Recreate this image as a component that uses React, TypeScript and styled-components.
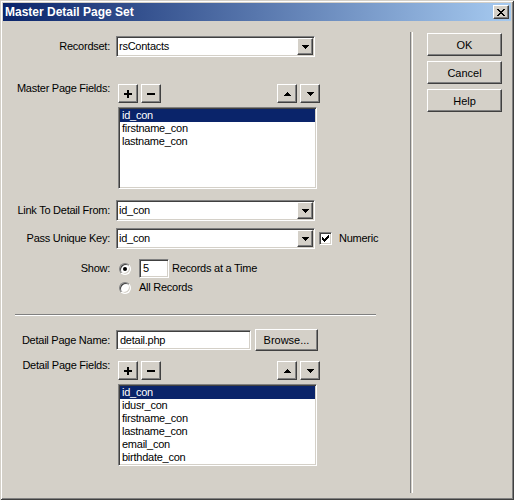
// libraries
import React from 'react';
import styled, { createGlobalStyle, css } from 'styled-components';

const GlobalStyle = createGlobalStyle`
  html, body {
    margin: 0;
    padding: 0;
    background: #d4d0c8;
  }
  body {
    font-family: "Liberation Sans", Arial, sans-serif;
    font-size: 11px;
    letter-spacing: -0.25px;
    color: #000000;
  }
`;

// classic 3D edges
const sunken = css`
  box-sizing: border-box;
  border: 1px solid;
  border-color: #808080 #ffffff #ffffff #808080;
  box-shadow: inset 1px 1px #404040, inset -1px -1px #d4d0c8;
`;

const raised = css`
  box-sizing: border-box;
  border: 1px solid;
  border-color: #ffffff #404040 #404040 #ffffff;
  box-shadow: inset -1px -1px #808080, inset 1px 1px #d4d0c8;
  background: #d4d0c8;
`;

const Styled_Window = styled.div`
  box-sizing: border-box;
  width: 514px;
  height: 500px;
  padding: 3px;
  display: flex;
  flex-direction: column;
  background: #d4d0c8;
  box-shadow: inset 1px 1px #d4d0c8, inset -1px -1px #404040, inset 2px 2px #ffffff, inset -2px -2px #808080;
`;

const Styled_TitleBar = styled.div`
  height: 18px;
  display: flex;
  align-items: center;
  justify-content: space-between;
  padding: 0 2px;
  background: linear-gradient(to right, #0a246a, #a6caf0);
`;

const Styled_Title = styled.span`
  color: #ffffff;
  font-weight: bold;
  font-size: 12px;
  letter-spacing: 0;
`;

const Styled_CloseButton = styled.div`
  ${raised};
  width: 16px;
  height: 14px;
  display: flex;
  align-items: center;
  justify-content: center;
`;

const Styled_Body = styled.div`
  flex: 1;
  display: flex;
`;

const Styled_FormPane = styled.div`
  width: 407px;
  padding-top: 15px;
  display: flex;
  flex-direction: column;
`;

const Styled_VerticalRule = styled.div`
  width: 1px;
  margin: 11px 0 4px 0;
  border-left: 1px solid #808080;
  border-right: 1px solid #ffffff;
`;

const Styled_ButtonColumn = styled.div`
  margin-left: 14px;
  padding-top: 12px;
  display: flex;
  flex-direction: column;
  gap: 5px;
`;

interface Styled_RowProps {
  $top: number;
  $align?: string;
};

const Styled_Row = styled.div<Styled_RowProps>`
  display: flex;
  align-items: ${({$align}) => $align || 'center'};
  margin-top: ${({$top}) => $top + 'px'};
`;

const Styled_Label = styled.div`
  width: 107px;
  margin-right: 6px;
  flex-shrink: 0;
  text-align: right;
  line-height: 13px;
  white-space: nowrap;
`;

const Styled_Text = styled.span`
  line-height: 13px;
  white-space: nowrap;
`;

const Styled_Combo = styled.div`
  ${sunken};
  width: 199px;
  height: 21px;
  padding: 1px;
  display: flex;
  background: #ffffff;
`;

const Styled_ComboValue = styled.div`
  flex: 1;
  padding-left: 1px;
  line-height: 17px;
`;

const Styled_DropButton = styled.div`
  ${raised};
  width: 16px;
  height: 17px;
  display: flex;
  align-items: center;
  justify-content: center;
`;

interface Styled_InputProps {
  $width: number;
  $height: number;
};

const Styled_Input = styled.div<Styled_InputProps>`
  ${sunken};
  width: ${({$width}) => $width + 'px'};
  height: ${({$height}) => $height + 'px'};
  padding: 0 3px;
  line-height: ${({$height}) => $height - 2 + 'px'};
  background: #ffffff;
`;

interface Styled_PushButtonProps {
  $width: number;
  $height: number;
};

const Styled_PushButton = styled.div<Styled_PushButtonProps>`
  ${raised};
  width: ${({$width}) => $width + 'px'};
  height: ${({$height}) => $height + 'px'};
  display: flex;
  align-items: center;
  justify-content: center;
  letter-spacing: 0;
`;

const Styled_FieldList = styled.div`
  display: flex;
  flex-direction: column;
  margin-left: 2px;
`;

const Styled_Toolbar = styled.div`
  width: 202px;
  margin-top: 2px;
  display: flex;
  justify-content: space-between;
`;

const Styled_ToolGroup = styled.div`
  display: flex;
  gap: 3px;
`;

const Styled_ToolButton = styled.div`
  ${raised};
  width: 20px;
  height: 19px;
  display: flex;
  align-items: center;
  justify-content: center;
`;

const Styled_ListBox = styled.div`
  ${sunken};
  width: 199px;
  height: 82px;
  margin-top: 4px;
  padding: 1px;
  background: #ffffff;
  overflow: hidden;
`;

interface Styled_ListItemProps {
  $selected?: boolean;
};

const Styled_ListItem = styled.div<Styled_ListItemProps>`
  height: 13px;
  line-height: 13px;
  padding-left: 2px;
  background: ${({$selected}) => $selected ? '#0a246a' : 'transparent'};
  color: ${({$selected}) => $selected ? '#ffffff' : '#000000'};
`;

const Styled_CheckBox = styled.div`
  ${sunken};
  width: 13px;
  height: 13px;
  margin: 0 7px 0 4px;
  display: flex;
  align-items: center;
  justify-content: center;
  background: #ffffff;
`;

interface Styled_RadioProps {
  $checked?: boolean;
};

const Styled_Radio = styled.div<Styled_RadioProps>`
  box-sizing: border-box;
  position: relative;
  width: 12px;
  height: 12px;
  margin: 0 8px 0 3px;
  flex-shrink: 0;
  border-radius: 50%;
  border: 1px solid;
  border-color: #808080 #ffffff #ffffff #808080;
  box-shadow: inset 1px 1px #404040, inset -1px -1px #d4d0c8;
  background: #ffffff;

  &::after {
    content: '';
    display: ${({$checked}) => $checked ? 'block' : 'none'};
    position: absolute;
    left: 3px;
    top: 3px;
    width: 4px;
    height: 4px;
    border-radius: 50%;
    background: #000000;
  }
`;

const Styled_HorizontalRule = styled.div`
  width: 361px;
  margin: 20px 0 0 12px;
  border-top: 1px solid #808080;
  border-bottom: 1px solid #ffffff;
`;

// glyphs
const DownArrow = () => (
  <svg width="7" height="4" viewBox="0 0 7 4" shapeRendering="crispEdges">
    <path d="M0 0h7v1H0zM1 1h5v1H1zM2 2h3v1H2zM3 3h1v1H3z" fill="#000" />
  </svg>
);

const UpArrow = () => (
  <svg width="7" height="4" viewBox="0 0 7 4" shapeRendering="crispEdges">
    <path d="M3 0h1v1H3zM2 1h3v1H2zM1 2h5v1H1zM0 3h7v1H0z" fill="#000" />
  </svg>
);

const PlusGlyph = () => (
  <svg width="8" height="8" viewBox="0 0 8 8" shapeRendering="crispEdges">
    <path d="M3 0h2v8H3zM0 3h8v2H0z" fill="#000" />
  </svg>
);

const MinusGlyph = () => (
  <svg width="8" height="8" viewBox="0 0 8 8" shapeRendering="crispEdges">
    <path d="M0 3h8v2H0z" fill="#000" />
  </svg>
);

const CloseGlyph = () => (
  <svg width="8" height="7" viewBox="0 0 8 7" shapeRendering="crispEdges">
    <path d="M0 0h2v1H0zM6 0h2v1H6zM1 1h2v1H1zM5 1h2v1H5zM2 2h4v1H2zM3 3h2v1H3zM2 4h4v1H2zM1 5h2v1H1zM5 5h2v1H5zM0 6h2v1H0zM6 6h2v1H6z" fill="#000" />
  </svg>
);

const CheckGlyph = () => (
  <svg width="7" height="7" viewBox="0 0 7 7" shapeRendering="crispEdges">
    <path d="M6 0h1v3H6zM5 1h1v3H5zM4 2h1v3H4zM3 3h1v3H3zM2 4h1v3H2zM1 3h1v3H1zM0 2h1v3H0z" fill="#000" />
  </svg>
);

const Combo = ({ value }: { value: string }) => (
  <Styled_Combo>
    <Styled_ComboValue>{value}</Styled_ComboValue>
    <Styled_DropButton><DownArrow /></Styled_DropButton>
  </Styled_Combo>
);

const FieldList = ({ items }: { items: string[] }) => (
  <Styled_FieldList>
    <Styled_Toolbar>
      <Styled_ToolGroup>
        <Styled_ToolButton><PlusGlyph /></Styled_ToolButton>
        <Styled_ToolButton><MinusGlyph /></Styled_ToolButton>
      </Styled_ToolGroup>
      <Styled_ToolGroup>
        <Styled_ToolButton><UpArrow /></Styled_ToolButton>
        <Styled_ToolButton><DownArrow /></Styled_ToolButton>
      </Styled_ToolGroup>
    </Styled_Toolbar>
    <Styled_ListBox>
      {items.map((item, i) => (
        <Styled_ListItem key={item} $selected={i === 0}>{item}</Styled_ListItem>
      ))}
    </Styled_ListBox>
  </Styled_FieldList>
);

const masterFields = ['id_con', 'firstname_con', 'lastname_con'];
const detailFields = ['id_con', 'idusr_con', 'firstname_con', 'lastname_con', 'email_con', 'birthdate_con'];

export default function App() {
  return (
    <>
      <GlobalStyle />
      <Styled_Window>
        <Styled_TitleBar>
          <Styled_Title>Master Detail Page Set</Styled_Title>
          <Styled_CloseButton><CloseGlyph /></Styled_CloseButton>
        </Styled_TitleBar>
        <Styled_Body>
          <Styled_FormPane>
            <Styled_Row $top={0}>
              <Styled_Label>Recordset:</Styled_Label>
              <Combo value="rsContacts" />
            </Styled_Row>

            <Styled_Row $top={25} $align="flex-start">
              <Styled_Label>Master Page Fields:</Styled_Label>
              <FieldList items={masterFields} />
            </Styled_Row>

            <Styled_Row $top={11}>
              <Styled_Label>Link To Detail From:</Styled_Label>
              <Combo value="id_con" />
            </Styled_Row>

            <Styled_Row $top={7}>
              <Styled_Label>Pass Unique Key:</Styled_Label>
              <Combo value="id_con" />
              <Styled_CheckBox><CheckGlyph /></Styled_CheckBox>
              <Styled_Text>Numeric</Styled_Text>
            </Styled_Row>

            <Styled_Row $top={10}>
              <Styled_Label>Show:</Styled_Label>
              <Styled_Radio $checked />
              <Styled_Input $width={30} $height={19}>5</Styled_Input>
              <Styled_Text style={{ marginLeft: 3 }}>Records at a Time</Styled_Text>
            </Styled_Row>

            <Styled_Row $top={3}>
              <Styled_Label />
              <Styled_Radio />
              <Styled_Text>All Records</Styled_Text>
            </Styled_Row>

            <Styled_HorizontalRule />

            <Styled_Row $top={13}>
              <Styled_Label>Detail Page Name:</Styled_Label>
              <Styled_Input $width={135} $height={20}>detail.php</Styled_Input>
              <Styled_PushButton $width={63} $height={22} style={{ marginLeft: 4 }}>Browse...</Styled_PushButton>
            </Styled_Row>

            <Styled_Row $top={8} $align="flex-start">
              <Styled_Label>Detail Page Fields:</Styled_Label>
              <FieldList items={detailFields} />
            </Styled_Row>
          </Styled_FormPane>

          <Styled_VerticalRule />

          <Styled_ButtonColumn>
            <Styled_PushButton $width={75} $height={23}>OK</Styled_PushButton>
            <Styled_PushButton $width={75} $height={23}>Cancel</Styled_PushButton>
            <Styled_PushButton $width={75} $height={23}>Help</Styled_PushButton>
          </Styled_ButtonColumn>
        </Styled_Body>
      </Styled_Window>
    </>
  );
}
